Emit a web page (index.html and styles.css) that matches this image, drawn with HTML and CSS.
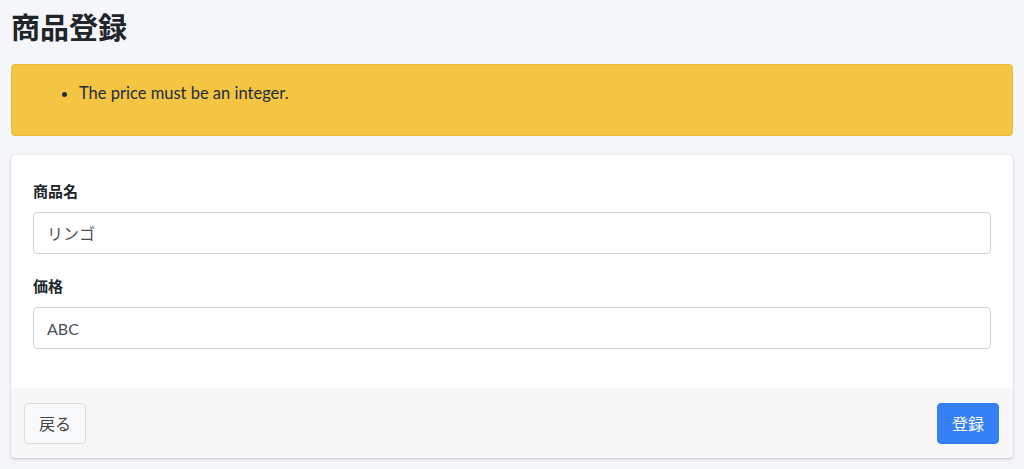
FILE: index.html
```html
<!DOCTYPE html>
<html lang="ja">
<head>
<meta charset="utf-8">
<title>商品登録</title>
<link rel="stylesheet" href="styles.css">
</head>
<body>
<main class="content">
  <h1 class="page-title">商品登録</h1>

  <div class="alert alert-warning">
    <ul class="alert-list">
      <li>The price must be an integer.</li>
    </ul>
  </div>

  <form class="card">
    <div class="card-body">
      <div class="form-group">
        <label class="form-label" for="name">商品名</label>
        <input class="form-control" id="name" type="text" value="リンゴ">
      </div>
      <div class="form-group">
        <label class="form-label" for="price">価格</label>
        <input class="form-control" id="price" type="text" value="ABC">
      </div>
    </div>
    <div class="card-footer">
      <button type="button" class="btn btn-default">戻る</button>
      <button type="submit" class="btn btn-primary">登録</button>
    </div>
  </form>
</main>
</body>
</html>
```

FILE: styles.css
```css
* {
  box-sizing: border-box;
}

html, body {
  margin: 0;
  padding: 0;
}

body {
  background: #f4f6f9;
  color: #212529;
  font-family: "Lato", "Noto Sans CJK JP", sans-serif;
  font-size: 16px;
  line-height: 1.5;
}

.content {
  padding: 8px 11px 10px 11px;
}

.page-title {
  margin: 0 0 16px 0;
  font-size: 29px;
  font-weight: 700;
  line-height: 40px;
  color: #212529;
}

.alert {
  border-radius: 4px;
  padding: 16px 20px 14px 20px;
  margin-bottom: 19px;
}

.alert-warning {
  background: #f4c443;
  border: 1px solid #edbb3a;
  color: #1f2d3d;
  font-size: 16.5px;
  line-height: 24px;
}

.alert-list {
  margin: 0 0 16px 0;
  padding-left: 47px;
}

.card {
  display: block;
  background: #fff;
  border-radius: 4px;
  box-shadow: 0 0 1px rgba(0, 0, 0, 0.125), 0 1px 3px rgba(0, 0, 0, 0.2);
  overflow: hidden;
}

.card-body {
  padding: 24px 22px 19px 22px;
}

.form-group {
  margin-bottom: 20px;
}

.form-label {
  display: block;
  font-size: 15px;
  font-weight: 700;
  line-height: 24px;
  margin-bottom: 9px;
  color: #212529;
}

.form-control {
  display: block;
  width: 100%;
  height: 42px;
  padding: 0 13px;
  font-family: inherit;
  font-size: 16px;
  color: #495057;
  background: #fff;
  border: 1px solid #ced4da;
  border-radius: 4px;
  outline: none;
}

.card-footer {
  display: flex;
  justify-content: space-between;
  align-items: center;
  background: #f7f7f7;
  padding: 15px 14px 14px 13px;
}

.btn {
  height: 41px;
  padding: 0 14px;
  font-family: inherit;
  font-size: 16px;
  line-height: 1;
  border-radius: 4px;
  border: 1px solid transparent;
  cursor: pointer;
}

.btn-default {
  background: #f8f9fa;
  border-color: #dcdcdc;
  color: #444;
}

.btn-primary {
  background: #3580f6;
  border-color: #3580f6;
  color: #fff;
}
```
